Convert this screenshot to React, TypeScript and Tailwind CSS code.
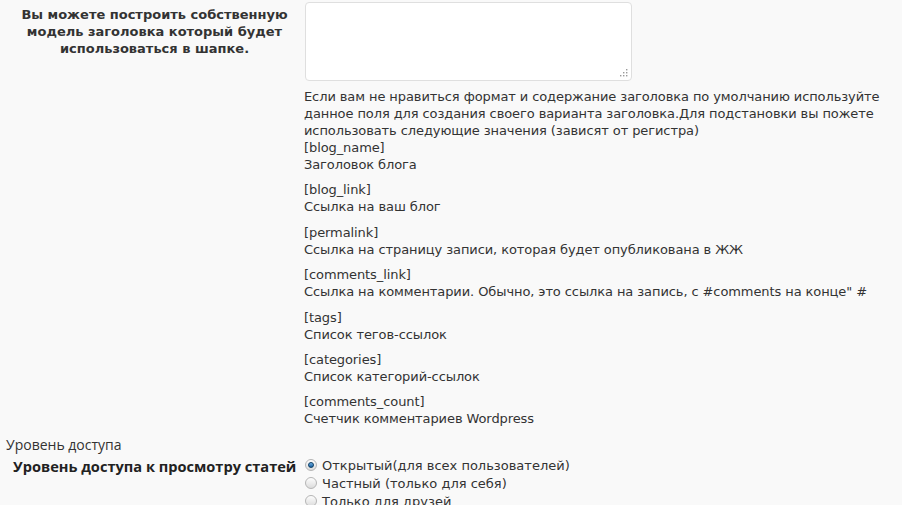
import React from "react";

const groups: [string, string][] = [
  ["[blog_link]", "Ссылка на ваш блог"],
  ["[permalink]", "Ссылка на страницу записи, которая будет опубликована в ЖЖ"],
  ["[comments_link]", "Ссылка на комментарии. Обычно, это ссылка на запись, с #comments на конце\" #"],
  ["[tags]", "Список тегов-ссылок"],
  ["[categories]", "Список категорий-ссылок"],
  ["[comments_count]", "Счетчик комментариев Wordpress"],
];

function Radio({ checked }: { checked?: boolean }) {
  return (
    <span className="relative inline-flex h-[12px] w-[12px] shrink-0 items-center justify-center rounded-full border border-[#b5b5b5] bg-gradient-to-b from-[#fdfdfd] to-[#dcdcdc]">
      {checked && (
        <span className="h-[6px] w-[6px] rounded-full border border-[#0d3f66] bg-gradient-to-b from-[#6fb2e6] to-[#1660a0]" />
      )}
    </span>
  );
}

export default function App() {
  return (
    <div
      className="min-h-[505px] w-full overflow-hidden bg-[#f9f9f9] text-[13px] leading-[17px] text-[#333]"
      style={{ fontFamily: '"DejaVu Sans", Verdana, sans-serif' }}
    >
      <div className="flex">
        <div className="w-[305px] shrink-0 pt-[6px] pl-[8px] pr-[4px] text-center font-bold">
          Вы можете построить собственную
          <br />
          модель заголовка который будет
          <br />
          использоваться в шапке.
        </div>
        <div className="pt-[2px] whitespace-nowrap">
          <div className="relative h-[79px] w-[327px] rounded-[4px] border border-[#dfdfdf] bg-white">
            <svg className="absolute bottom-[3px] right-[3px]" width="9" height="9" viewBox="0 0 9 9">
              <rect x="7" y="1" width="1.4" height="1.4" fill="#9a9a9a" />
              <rect x="4" y="4" width="1.4" height="1.4" fill="#9a9a9a" />
              <rect x="7" y="4" width="1.4" height="1.4" fill="#9a9a9a" />
              <rect x="1" y="7" width="1.4" height="1.4" fill="#9a9a9a" />
              <rect x="4" y="7" width="1.4" height="1.4" fill="#9a9a9a" />
              <rect x="7" y="7" width="1.4" height="1.4" fill="#9a9a9a" />
            </svg>
          </div>
          <div className="mt-[7px] -ml-[1px] tracking-[-0.09px]">
            <div>
              Если вам не нравиться формат и содержание заголовка по умолчанию используйте
              <br />
              данное поля для создания своего варианта заголовка.Для подстановки вы пожете
              <br />
              использовать следующие значения (зависят от регистра)
            </div>
            <div>[blog_name]</div>
            <div>Заголовок блога</div>
            {groups.map(([k, v]) => (
              <div key={k} className="mt-[8.4px]">
                <div>{k}</div>
                <div>{v}</div>
              </div>
            ))}
          </div>
        </div>
      </div>
      <div
        className="mt-[8px] pl-[6px] text-[14px] leading-[20px] text-[#333]"
        style={{ fontFamily: '"Open Sans", "Noto Sans", sans-serif' }}
      >
        Уровень доступа
      </div>
      <div className="mt-[1px] flex">
        <div
          className="w-[305px] shrink-0 pl-[13px] pt-[1px] text-[14.6px] font-bold leading-[18px] whitespace-nowrap text-[#222]"
          style={{ fontFamily: '"Open Sans", "Noto Sans", sans-serif' }}
        >
          Уровень доступа к просмотру статей
        </div>
        <div className="flex flex-col">
          {["Открытый(для всех пользователей)", "Частный (только для себя)", "Только для друзей"].map((t, i) => (
            <label key={t} className="flex h-[18px] items-center gap-[5px] whitespace-nowrap">
              <Radio checked={i === 0} />
              <span>{t}</span>
            </label>
          ))}
        </div>
      </div>
    </div>
  );
}
